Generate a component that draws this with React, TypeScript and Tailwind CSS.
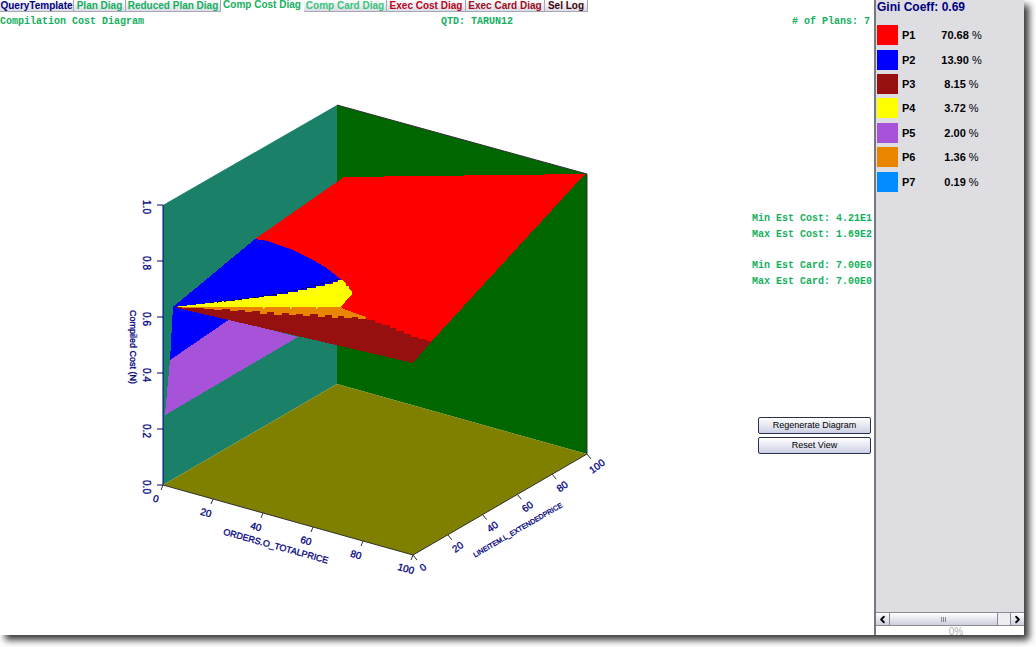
import React from 'react';
import { ChevronLeft, ChevronRight } from 'lucide-react';

interface Tab {
  label: string;
  width: string;
  color: string;
  active?: boolean;
}

interface Plan {
  name: string;
  share: string;
  swatch: string;
}

const tabs: Tab[] = [
  { label: 'QueryTemplate', width: 'w-[74px]', color: 'text-[#000080]' },
  { label: 'Plan Diag', width: 'w-[52px]', color: 'text-[#14b060]' },
  { label: 'Reduced Plan Diag', width: 'w-[95px]', color: 'text-[#14b060]' },
  { label: 'Comp Cost Diag', width: 'w-[83px]', color: 'text-[#14b060]', active: true },
  { label: 'Comp Card Diag', width: 'w-[83px]', color: 'text-[#3cc47c]' },
  { label: 'Exec Cost Diag', width: 'w-[79px]', color: 'text-[#b8061c]' },
  { label: 'Exec Card Diag', width: 'w-[79px]', color: 'text-[#a00c20]' },
  { label: 'Sel Log', width: 'w-[43px]', color: 'text-[#40040c]' },
];

const plans: Plan[] = [
  { name: 'P1', share: '70.68', swatch: 'bg-[#ff0000]' },
  { name: 'P2', share: '13.90', swatch: 'bg-[#0000ff]' },
  { name: 'P3', share: '8.15', swatch: 'bg-[#961010]' },
  { name: 'P4', share: '3.72', swatch: 'bg-[#ffff00]' },
  { name: 'P5', share: '2.00', swatch: 'bg-[#a653d9]' },
  { name: 'P6', share: '1.36', swatch: 'bg-[#ea8500]' },
  { name: 'P7', share: '0.19', swatch: 'bg-[#008cff]' },
];

const TabBar: React.FC = () => (
  <nav role="tablist" className="flex h-3 text-[10px] leading-3 font-bold">
    {tabs.map((tab) => (
      <button
        key={tab.label}
        role="tab"
        aria-selected={!!tab.active}
        className={`flex shrink-0 justify-center whitespace-nowrap border-r ${tab.width} ${tab.color} ${
          tab.active
            ? 'items-start border-transparent bg-white leading-[10px]'
            : 'items-center border-b border-[#a8a8b4] bg-linear-to-b from-white to-[#dcdce8]'
        }`}
      >
        {tab.label}
      </button>
    ))}
  </nav>
);

const zTicks = [
  { label: '1.0', y: 205 },
  { label: '0.8', y: 261 },
  { label: '0.6', y: 317 },
  { label: '0.4', y: 373 },
  { label: '0.2', y: 429 },
  { label: '0.0', y: 485 },
];

const steps = [0, 20, 40, 60, 80, 100];

const CostDiagram: React.FC = () => (
  <svg
    viewBox="120 95 490 490"
    className="h-[490px] w-[490px] shrink-0"
    role="img"
    aria-label="Compilation cost diagram"
  >
    {/* walls and floor */}
    <path d="M163 205 337 105V384L163 485Z" fill="#1a8068" />
    <path d="M337 105 587 174V454L337 384Z" fill="#006600" />
    <path d="M163 485 337 384 587 454 413 555Z" fill="#808000" />

    {/* cost surface, one region per plan */}
    <g shapeRendering="crispEdges">
      <path d="M170 360 228 319 298 337 165 415Z" fill="#a653d9" />
      <path d="M173 306 230 319 170 360Z" fill="#0000ff" />
      <path d="M344 177 585 174 430 343 400 335 330 310 250 300 255 239Z" fill="#ff0000" />
      <path
        d="M173 307 255 239 268 241 281 246 293 250 305 256 315 261 325 267 333 273 342 280 310 290 277 298 243 303Z"
        fill="#0000ff"
      />
      <path
        d="M173 307 413 363 431 342 425 340V339H418V337H411V334H404V331H396V328H390V325H382V323H375V320H367V318L340 310Z"
        fill="#961010"
      />
      <path
        d="M173 307H341L346 310 352 312 366 317V319H358V317H352V318H344V316H338V318H332V315H325V317H318V314H310V316H303V314H296V315H289V313H282V315H274V312H267V314H260V311H252V312H245V310H238V311H230V309H222V310H214V309H204V308H190Z"
        fill="#ea8500"
      />
      <path
        d="M173 307 210 303 243 299 264 297V296H277V294H288V292H298V290H307V288H316V286H325V284H333V282H338V280H342L346 284V286H349V289L352 292V295L348 298 345 302 340 307H318L316 309V307H292L290 309V307H265L263 309V307Z"
        fill="#ffff00"
      />
      <path d="M210 303 243 299 264 296 288 292 307 288 325 283 340 279" fill="none" stroke="#000040" strokeDasharray="4 3" />
    </g>

    {/* axes */}
    <g stroke="#000080" fill="none">
      <path d="M163 205V485" />
      {zTicks.map((t) => (
        <path key={t.label} d={`M157 ${t.y}h6`} />
      ))}
    </g>
    <g stroke="#303030" fill="none">
      <path d="M163 485 413 555 587 454V174L337 105" />
      {steps.map((s) => (
        <path key={s} d={`M${163 + s * 2.5} ${485 + s * 0.7}l-2 5M${413 + s * 1.74} ${555 - s * 1.01}l4 5`} />
      ))}
    </g>

    <g fill="#000080" stroke="#000080" strokeWidth="0.3" fontSize="10" textAnchor="middle">
      {zTicks.map((t) => (
        <text key={t.label} transform={`translate(143 ${t.y + 2}) rotate(90)`}>
          {t.label}
        </text>
      ))}
      {steps.map((s) => (
        <text key={s} transform={`translate(${155 + s * 2.5} ${502 + s * 0.7}) rotate(16)`}>
          {s}
        </text>
      ))}
      {steps.map((s) => (
        <text key={s} transform={`translate(${425 + s * 1.74} ${570 - s * 1.01}) rotate(-36)`}>
          {s}
        </text>
      ))}
      <text transform="translate(130 347) rotate(90)" fontSize="9">Compiled Cost (N)</text>
      <text transform="translate(275 549) rotate(15.5)" fontSize="9">ORDERS.O_TOTALPRICE</text>
      <text transform="translate(519 532) rotate(-30)" fontSize="7">LINEITEM.L_EXTENDEDPRICE</text>
    </g>
  </svg>
);

const actionButton =
  'h-[17px] rounded-xs border border-[#28304c] bg-linear-to-b from-white to-[#ccd0e4] text-[9px] leading-[15px] text-black';

const Estimates: React.FC = () => (
  <aside className="flex w-[120px] shrink-0 flex-col text-[#14b060]">
    <div className="font-['Liberation_Mono',monospace] text-[10px] leading-4 font-bold whitespace-nowrap">
      <p>Min Est Cost: 4.21E1</p>
      <p>Max Est Cost: 1.69E2</p>
      <p className="mt-[15px]">Min Est Card: 7.00E0</p>
      <p>Max Est Card: 7.00E0</p>
    </div>
    <div className="mt-[127px] mr-px ml-[6px] flex flex-col gap-[3px]">
      <button className={actionButton}>Regenerate Diagram</button>
      <button className={actionButton}>Reset View</button>
    </div>
  </aside>
);

const PlanPanel: React.FC = () => (
  <section className="flex w-[150px] shrink-0 flex-col border-l-2 border-[#77777f] bg-[#dedde2]">
    <h2 className="h-[23px] pl-px text-[12px] leading-[15px] font-bold text-[#000080]">Gini Coeff: 0.69</h2>
    <table className="ml-px h-[171px] w-[108px] table-fixed text-[11px] leading-5 font-bold text-black">
      <tbody>
        {plans.map((plan) => (
          <tr key={plan.name}>
            <td className="w-[25px] p-0">
              <div className={`h-5 w-[21px] ${plan.swatch}`} />
            </td>
            <td className="w-[36px] p-0">{plan.name}</td>
            <td className="p-0 text-center whitespace-nowrap">
              {plan.share} <span className="font-normal">%</span>
            </td>
          </tr>
        ))}
      </tbody>
    </table>
    <div className="mt-auto flex h-[14px] border-y border-[#8a8a94] bg-[#eeeef2]">
      <button
        aria-label="Scroll left"
        className="flex w-[14px] items-center justify-center border-r border-[#8a8a94] bg-linear-to-b from-white to-[#ccd0dc] text-black"
      >
        <ChevronLeft size={11} strokeWidth={4} />
      </button>
      <div className="flex flex-1 pr-3">
        <div className="flex flex-1 items-center justify-center gap-px border-r border-[#8a8a94] bg-linear-to-b from-white to-[#ccd0dc]">
          <span className="h-[5px] w-px bg-[#85858f]" />
          <span className="h-[5px] w-px bg-[#85858f]" />
          <span className="h-[5px] w-px bg-[#85858f]" />
        </div>
      </div>
      <button
        aria-label="Scroll right"
        className="flex w-[14px] items-center justify-center border-l border-[#8a8a94] bg-linear-to-b from-white to-[#ccd0dc] text-black"
      >
        <ChevronRight size={11} strokeWidth={4} />
      </button>
    </div>
    <div className="h-[9px] bg-white pl-3 text-center text-[10px] leading-[11px] text-[#b0b0b8]">0%</div>
  </section>
);

export default function App() {
  return (
    <div className="h-screen w-full overflow-hidden bg-white pr-3 pb-3 font-['Liberation_Sans',Arial,sans-serif]">
      <div className="flex h-full bg-white shadow-[5px_5px_7px_#383838]">
        <main className="flex min-w-0 flex-1 flex-col">
          <TabBar />
          <header className="grid grid-cols-3 pt-1 pr-1 pb-[5px] font-['Liberation_Mono',monospace] text-[10px] leading-[11px] font-bold whitespace-nowrap text-[#14b060]">
            <h1>Compilation Cost Diagram</h1>
            <p className="pl-[84px] text-center">QTD: TARUN12</p>
            <p className="text-right">{'# of Plans: 7'}</p>
          </header>
          <div className="flex flex-1 justify-between pr-[2px] pl-[120px]">
            <div className="pt-[63px]">
              <CostDiagram />
            </div>
            <div className="flex pt-[179px]">
              <Estimates />
            </div>
          </div>
        </main>
        <PlanPanel />
      </div>
    </div>
  );
}
